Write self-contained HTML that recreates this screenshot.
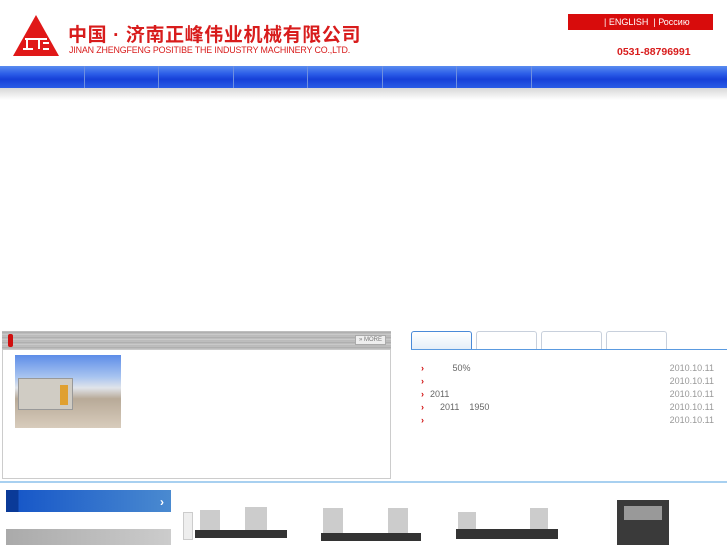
<!DOCTYPE html>
<html><head><meta charset="utf-8"><style>
*{margin:0;padding:0;box-sizing:border-box}
body{width:727px;height:545px;overflow:hidden;background:#fff;font-family:"Liberation Sans","Noto Sans CJK SC",sans-serif;position:relative}
.a{position:absolute}
.nav{left:0;top:66px;width:727px;height:22px;background:linear-gradient(#5a8cf0 0%,#2c5ee8 35%,#1640d8 60%,#2a5ce6 100%)}
.sep{top:66px;width:1px;height:22px;background:#6e8fe0}
.shadow{left:0;top:88px;width:727px;height:12px;background:linear-gradient(#d8d8d8,#fff)}
.row{font-size:9px;color:#666;left:421px;width:293px;height:12px}
.row b{color:#d01010;font-weight:bold;margin-right:6px}
.row span{position:absolute;right:0;color:#999}
.tab{top:331px;width:61px;height:19px;border:1px solid #c8d0dc;border-bottom:none;border-radius:3px 3px 0 0;background:#fff}
.m{background:#333}
</style></head><body>
<svg class="a" style="left:13px;top:15px" width="46" height="41" viewBox="0 0 46 41"><polygon points="23,0 46,41 0,41" fill="#e01818"/><path d="M12 24h22M14 24v10h6M26 24v10M30 28h6M30 34h6M14 34h-4" stroke="#fff" stroke-width="2" fill="none"/></svg>
<div class="a" style="left:68px;top:20px;font-size:19px;font-weight:bold;color:#d81c1c;letter-spacing:0.6px;white-space:nowrap">中国 · 济南正峰伟业机械有限公司</div>
<div class="a" style="left:69px;top:45px;font-size:8.9px;color:#d81c1c;white-space:nowrap;letter-spacing:-0.15px">JINAN ZHENGFENG POSITIBE THE INDUSTRY MACHINERY CO.,LTD.</div>
<div class="a" style="left:568px;top:14px;width:145px;height:16px;background:#d80c0c;color:#fff;font-size:9px;line-height:16px;padding-left:36px;white-space:nowrap">| ENGLISH&nbsp; | Россию</div>
<div class="a" style="left:617px;top:46px;font-size:10.5px;font-weight:bold;color:#d81c1c">0531-88796991</div>
<div class="a nav"></div>
<div class="a sep" style="left:84px"></div><div class="a sep" style="left:158px"></div><div class="a sep" style="left:233px"></div><div class="a sep" style="left:307px"></div><div class="a sep" style="left:382px"></div><div class="a sep" style="left:456px"></div><div class="a sep" style="left:531px"></div>
<div class="a shadow"></div>
<div class="a" style="left:2px;top:331px;width:389px;height:148px;border:1px solid #ccc"></div>
<div class="a" style="left:2px;top:331px;width:389px;height:19px;background:repeating-linear-gradient(#c4c4c4 0,#a8a8a8 2px,#d0d0d0 3px,#b4b4b4 5px)"></div>
<div class="a" style="left:8px;top:334px;width:5px;height:13px;background:#d01010;border-radius:2px"></div>
<div class="a" style="left:355px;top:335px;width:31px;height:10px;background:#eee;border:1px solid #aaa;font-size:6px;color:#777;line-height:8px;text-align:center">» MORE</div>
<div class="a" style="left:15px;top:355px;width:106px;height:73px;background:linear-gradient(#5d8de8 0%,#a8c4f0 30%,#e0e4ea 45%,#b8aa98 60%,#d8ccbc 100%)"></div>
<div class="a" style="left:18px;top:378px;width:55px;height:32px;background:#d0ccc4;border:1px solid #999"></div>
<div class="a" style="left:60px;top:385px;width:8px;height:20px;background:#e0a030"></div>
<div class="a tab" style="left:411px;border-color:#4a8ad8;background:linear-gradient(#fff,#e4eef8)"></div>
<div class="a tab" style="left:476px"></div><div class="a tab" style="left:541px"></div><div class="a tab" style="left:606px"></div>
<div class="a" style="left:411px;top:349px;width:316px;height:1px;background:#5a9ae0"></div>
<div class="a row" style="top:363px"><b>›</b>&nbsp;&nbsp;&nbsp;&nbsp;&nbsp;&nbsp;&nbsp;&nbsp; 50%<span>2010.10.11</span></div>
<div class="a row" style="top:376px"><b>›</b><span>2010.10.11</span></div>
<div class="a row" style="top:389px"><b>›</b>2011<span>2010.10.11</span></div>
<div class="a row" style="top:402px"><b>›</b>&nbsp;&nbsp;&nbsp; 2011 &nbsp;&nbsp; 1950<span>2010.10.11</span></div>
<div class="a row" style="top:415px"><b>›</b><span>2010.10.11</span></div>
<div class="a" style="left:0;top:481px;width:727px;height:2px;background:#a8d0f0"></div>
<div class="a" style="left:6px;top:490px;width:165px;height:22px;background:linear-gradient(90deg,#0a3a98 0,#0a3a98 12px,#1858c8 13px,#4a8ad0 100%)"></div>
<div class="a" style="left:160px;top:495px;color:#fff;font-size:12px;font-weight:bold">›</div>
<div class="a" style="left:6px;top:529px;width:165px;height:16px;background:linear-gradient(90deg,#aaa,#ccc)"></div>
<div class="a" style="left:183px;top:512px;width:10px;height:28px;background:#eee;border:1px solid #ccc"></div>
<div class="a" style="left:200px;top:510px;width:20px;height:22px;background:#ccc"></div>
<div class="a" style="left:245px;top:507px;width:22px;height:25px;background:#ccc"></div>
<div class="a m" style="left:195px;top:530px;width:92px;height:8px"></div>
<div class="a" style="left:323px;top:508px;width:20px;height:25px;background:#ccc"></div>
<div class="a" style="left:388px;top:508px;width:20px;height:25px;background:#ccc"></div>
<div class="a m" style="left:321px;top:533px;width:100px;height:8px"></div>
<div class="a" style="left:458px;top:512px;width:18px;height:18px;background:#ccc"></div>
<div class="a" style="left:530px;top:508px;width:18px;height:25px;background:#ccc"></div>
<div class="a m" style="left:456px;top:529px;width:102px;height:10px"></div>
<div class="a m" style="left:617px;top:500px;width:52px;height:45px;background:#3a3a3a"></div>
<div class="a" style="left:624px;top:506px;width:38px;height:14px;background:#999"></div>
</body></html>
